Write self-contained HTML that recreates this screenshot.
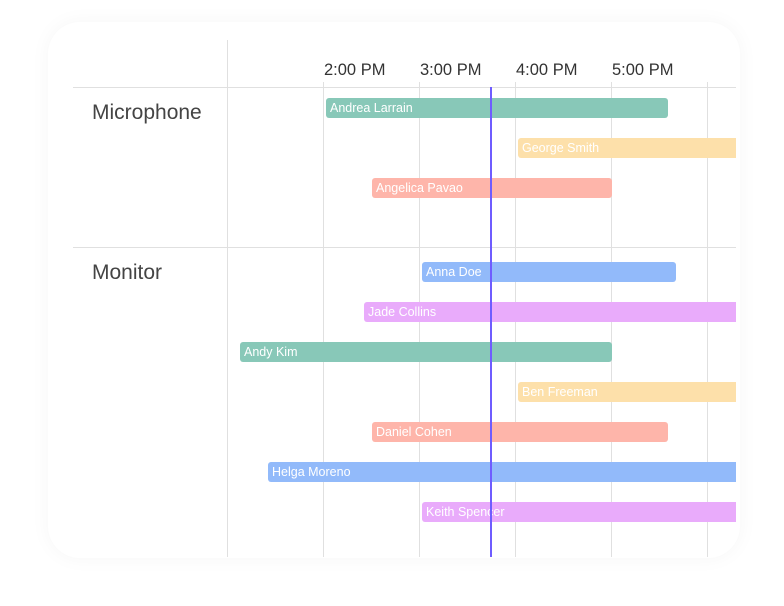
<!DOCTYPE html>
<html><head><style>
body{margin:0;width:784px;height:606px;background:#fff;position:relative;overflow:hidden;font-family:"Liberation Sans",sans-serif}
.card{position:absolute;left:48px;top:22px;width:692px;height:536px;border-radius:32px;background:#fff;box-shadow:0 0 20px rgba(0,0,0,0.04)}
.clip{position:absolute;left:0;top:0;width:736px;height:606px;overflow:hidden}
.v{position:absolute;width:1px;background:#e0e0e0;bottom:49px}
.h{position:absolute;left:73px;width:663px;height:1px;background:#e0e0e0}
.t{position:absolute;top:61px;font-size:16.5px;color:#333}
.lab{position:absolute;left:92px;font-size:21px;color:#444}
.b{position:absolute;height:20px;border-radius:3px;color:#fff;font-size:12.5px;line-height:20px;padding-left:4px;box-sizing:border-box;white-space:nowrap}
.g{background:#88c8b8}.y{background:#fde0aa}.p{background:#feb5aa}.bl{background:#92bafa}.pu{background:#e9abfb}
</style></head><body>
<div class="card"></div>
<div class="clip">
<div class="v" style="left:227px;top:40px"></div>
<div class="v" style="left:323px;top:82px"></div>
<div class="v" style="left:419px;top:82px"></div>
<div class="v" style="left:515px;top:82px"></div>
<div class="v" style="left:611px;top:82px"></div>
<div class="v" style="left:707px;top:82px"></div>
<div class="h" style="top:87px"></div>
<div class="h" style="top:247px"></div>
<div class="t" style="left:324px">2:00 PM</div>
<div class="t" style="left:420px">3:00 PM</div>
<div class="t" style="left:516px">4:00 PM</div>
<div class="t" style="left:612px">5:00 PM</div>
<div class="lab" style="top:101px">Microphone</div>
<div class="lab" style="top:261px">Monitor</div>
<div class="b g" style="left:326px;top:98px;width:342px">Andrea Larrain</div>
<div class="b y" style="left:518px;top:138px;width:230px">George Smith</div>
<div class="b p" style="left:372px;top:178px;width:240px">Angelica Pavao</div>
<div class="b bl" style="left:422px;top:262px;width:254px">Anna Doe</div>
<div class="b pu" style="left:364px;top:302px;width:390px">Jade Collins</div>
<div class="b g" style="left:240px;top:342px;width:372px">Andy Kim</div>
<div class="b y" style="left:518px;top:382px;width:230px">Ben Freeman</div>
<div class="b p" style="left:372px;top:422px;width:296px">Daniel Cohen</div>
<div class="b bl" style="left:268px;top:462px;width:480px">Helga Moreno</div>
<div class="b pu" style="left:422px;top:502px;width:330px">Keith Spencer</div>
<div style="position:absolute;left:490px;top:87px;width:2px;height:470px;background:#6f5cff"></div>
</div>
</body></html>
